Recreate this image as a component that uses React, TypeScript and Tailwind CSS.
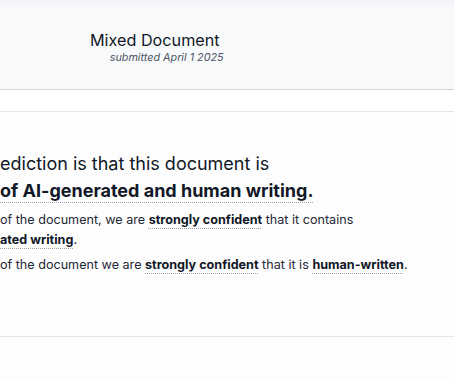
import React from "react";

const ul =
  "font-bold text-[#111827] underline decoration-dotted decoration-[#9ca3af] decoration-1";

export default function App() {
  return (
    <div
      className="w-[454px] h-[379px] overflow-hidden bg-[#fdfdfd] text-[#111827]"
      style={{ fontFamily: "Inter, 'Noto Sans', sans-serif" }}
    >
      <div className="h-[5px] bg-[#f3f4f7]" />
      <header className="h-[85px] bg-[#f8f9fb] border-b border-[#d4d5d8] pt-[23px]">
        <div className="ml-[90px] inline-flex flex-col items-end">
          <h1 className="text-[16.2px] leading-[22px] text-[#111827]">Mixed Document</h1>
          <p className="text-[10.8px] leading-[14px] italic text-[#4b5563] mr-[-4px]">
            submitted April 1 2025
          </p>
        </div>
      </header>
      <div className="h-[22px] border-b border-[#e5e7eb] bg-white" />
      <section className="h-[225px] border-b border-[#e5e7eb] pt-[38px]">
        <h2 className="text-[18px] leading-[27px] text-[#111827]">
          <span>ediction is that this document is</span>
          <br />
          <span className={`${ul} underline-offset-[5px]`}>
            of AI-generated and human writing.
          </span>
        </h2>
        <p className="mt-[6px] text-[12.6px] leading-[20px] text-[#1f2937]">
          of the document, we are{" "}
          <strong className={`${ul} underline-offset-[4px]`}>strongly confident</strong>{" "}
          that it contains
          <br />
          <strong className={`${ul} underline-offset-[4px]`}>ated writing</strong>.
        </p>
        <p className="mt-[5px] text-[12.6px] leading-[20px] text-[#1f2937]">
          of the document we are{" "}
          <strong className={`${ul} underline-offset-[4px]`}>strongly confident</strong>{" "}
          that it is{" "}
          <strong className={`${ul} underline-offset-[4px]`}>human-written</strong>.
        </p>
      </section>
    </div>
  );
}
